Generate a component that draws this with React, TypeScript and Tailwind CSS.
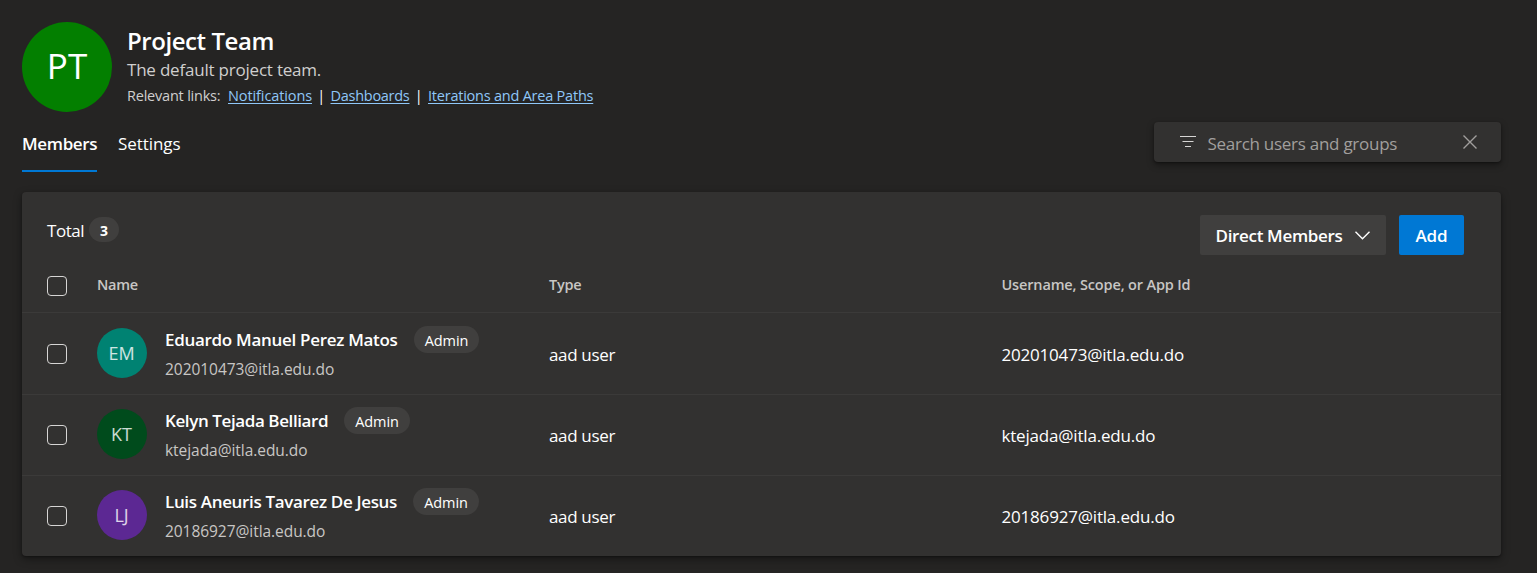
type Member = {
  initials: string;
  color: string;
  name: string;
  nameClass: string;
  badgeClass: string;
  email: string;
  smallClass: string;
  largeClass: string;
};

const members: Member[] = [
  {
    initials: "EM",
    color: "bg-[#008272]",
    name: "Eduardo Manuel Perez Matos",
    nameClass: "w-[249px] tracking-[-0.3px]",
    badgeClass: "w-[65px]",
    email: "202010473@itla.edu.do",
    smallClass: "tracking-[-0.05px]",
    largeClass: "tracking-[-0.2px]",
  },
  {
    initials: "KT",
    color: "bg-[#004b1c]",
    name: "Kelyn Tejada Belliard",
    nameClass: "w-[179px] tracking-[-0.4px]",
    badgeClass: "w-[66px]",
    email: "ktejada@itla.edu.do",
    smallClass: "tracking-[-0.05px]",
    largeClass: "tracking-[-0.19px]",
  },
  {
    initials: "LJ",
    color: "bg-[#5c2893]",
    name: "Luis Aneuris Tavarez De Jesus",
    nameClass: "w-[248px] tracking-[-0.34px]",
    badgeClass: "w-[66px]",
    email: "20186927@itla.edu.do",
    smallClass: "tracking-[-0.055px]",
    largeClass: "tracking-[-0.19px]",
  },
];

function Checkbox({ className }: { className: string }) {
  return (
    <span
      role="checkbox"
      aria-checked="false"
      className={`ml-[25px] size-5 shrink-0 rounded-[4px] border border-[#d6d5d4] ${className}`}
    />
  );
}

function Header() {
  return (
    <header className="flex h-[112px] pt-[22px]">
      <div className="flex size-[90px] items-center justify-center rounded-full bg-[#037f00] pb-[1px] text-[35px] text-white">
        PT
      </div>
      <div className="ml-[15px] text-[#d0cfce]">
        <h1 className="mt-[4px] h-[30px] text-[24px] leading-[30px] font-semibold tracking-[-0.44px] text-white">
          Project Team
        </h1>
        <p className="h-[28px] text-[17px] leading-[27px] tracking-[-0.21px]">The default project team.</p>
        <div className="flex text-[14.5px] leading-[23px]">
          <span className="w-[101px] tracking-[-0.21px]">Relevant links:</span>
          <a className="w-[84px] tracking-[-0.105px] text-[#8fc7f8] underline underline-offset-2">Notifications</a>
          <span className="w-[18.5px] text-center text-white">|</span>
          <a className="w-[79px] tracking-[-0.274px] text-[#8fc7f8] underline underline-offset-2">Dashboards</a>
          <span className="w-[18.5px] text-center text-white">|</span>
          <a className="tracking-[-0.225px] text-[#8fc7f8] underline underline-offset-2">Iterations and Area Paths</a>
        </div>
      </div>
    </header>
  );
}

function TabBar() {
  return (
    <div className="flex h-[80px] justify-between">
      <nav className="flex text-[17px] leading-[26px] text-white">
        <div className="h-[60px] w-[75px] border-b-2 border-[#0078d4] pt-[19px] font-semibold tracking-[-0.35px]">
          Members
        </div>
        <div className="ml-[21px] pt-[19px] tracking-[-0.067px]">Settings</div>
      </nav>
      <div className="mt-[10px] flex h-[40px] w-[347px] items-center rounded-[4px] bg-[#323130] shadow-[0_3px_7px_rgba(0,0,0,0.4),0_1px_2px_rgba(0,0,0,0.3)]">
        <svg className="ml-[26px] h-[14px] w-[16px]" viewBox="0 0 16 14" fill="none" stroke="#d6d5d4" strokeWidth="1.2">
          <path d="M0 1.5h16M2.5 6.5h11M5 11.5h6" />
        </svg>
        <span className="ml-[11.5px] grow pt-[3px] text-[17px] leading-[26px] tracking-[-0.27px] text-[#a19f9d]">
          Search users and groups
        </span>
        <svg className="mr-[24px] size-[14px]" viewBox="0 0 14 14" fill="none" stroke="#a19f9d" strokeWidth="1.4">
          <path d="M.5.5l13 13M13.5.5l-13 13" />
        </svg>
      </div>
    </div>
  );
}

function MemberRow({ member, first }: { member: Member; first: boolean }) {
  return (
    <div className={`flex h-[81px] ${first ? "pt-[15px]" : "border-t border-[#3b3a39] pt-[14px]"}`}>
      <Checkbox className="mt-[16px]" />
      <div
        className={`ml-[30px] flex size-[50px] shrink-0 items-center justify-center rounded-full pr-[1px] text-[18px] text-white/80 ${member.color}`}
      >
        {member.initials}
      </div>
      <div className="-mt-[2px] ml-[18px] w-[384px] whitespace-nowrap">
        <div className="flex h-[27px]">
          <span className={`text-[17px] leading-[27px] font-semibold text-white ${member.nameClass}`}>
            {member.name}
          </span>
          <span
            className={`flex h-[27px] items-center justify-center rounded-full bg-[#403f3e] pt-[2px] text-[14.5px] tracking-[-0.103px] text-white ${member.badgeClass}`}
          >
            Admin
          </span>
        </div>
        <div className={`mt-[4px] text-[15.5px] leading-[24px] text-[#c8c6c4] ${member.smallClass}`}>
          {member.email}
        </div>
      </div>
      <div className="mt-[14px] w-[452.5px] text-[17px] leading-[26px] tracking-[-0.341px] text-white">aad user</div>
      <div className={`mt-[14px] text-[17px] leading-[26px] text-white ${member.largeClass}`}>{member.email}</div>
    </div>
  );
}

export default function App() {
  return (
    <main className="h-[573px] w-[1537px] overflow-hidden bg-[#252423] pr-[36px] pl-[22px] font-['Open_Sans','Noto_Sans',sans-serif]">
      <Header />
      <TabBar />
      <section className="h-[364px] rounded-[4px] bg-[#323130] shadow-[0_3px_8px_rgba(0,0,0,0.4),0_1px_2px_rgba(0,0,0,0.3)]">
        <div className="flex h-[77px] pl-[25px] text-white">
          <span className="mt-[26px] w-[42px] text-[17px] leading-[26px] tracking-[-0.477px]">Total</span>
          <span className="mt-[25px] flex h-[25px] w-[30px] items-center justify-center rounded-full bg-[#403f3e] pt-[1px] text-[14px] font-bold">
            3
          </span>
          <button className="mt-[23px] ml-auto flex h-[40px] w-[186px] items-center rounded-[2px] bg-[#403f3e] pl-[15.5px] text-[17px] font-semibold tracking-[-0.327px]">
            <span className="pt-[2px]">Direct Members</span>
            <svg className="ml-[12px] h-[9px] w-[15px]" viewBox="0 0 15 9" fill="none" stroke="white" strokeWidth="1.4">
              <path d="M.5.8l7 7 7-7" />
            </svg>
          </button>
          <button className="mt-[23px] mr-[37px] ml-[13px] h-[40px] w-[65px] rounded-[2px] bg-[#0078d4] pt-[2px] text-[17px] font-semibold tracking-[-0.135px]">
            Add
          </button>
        </div>
        <div className="flex h-[44px] border-b border-[#3b3a39] text-[14.5px] leading-[22px] font-semibold text-[#c8c6c4]">
          <Checkbox className="mt-[7px]" />
          <span className="mt-[5px] ml-[30px] w-[452px] tracking-[-0.3px]">Name</span>
          <span className="mt-[5px] w-[452.5px] tracking-[-0.208px]">Type</span>
          <span className="mt-[5px] tracking-[-0.147px]">Username, Scope, or App Id</span>
        </div>
        {members.map((member, index) => (
          <MemberRow key={member.initials} member={member} first={index === 0} />
        ))}
      </section>
    </main>
  );
}
